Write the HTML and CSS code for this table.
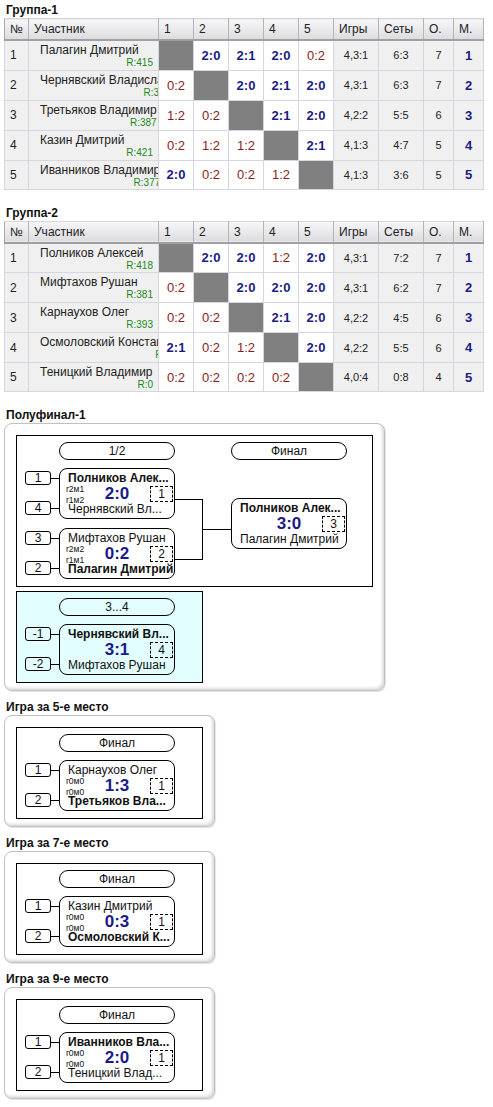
FILE: index.html
```html
<!DOCTYPE html>
<html lang="ru">
<head>
  <meta charset="UTF-8">
  <title>Турнир</title>
  <link rel="stylesheet" href="styles.css">
</head>
<body>

<!-- Группа 1 -->
<div class="sect">
  <div class="ttl">Группа-1</div>
  <table class="grid">
    <colgroup>
      <col class="c-no"><col class="c-who"><col class="c-sc"><col class="c-sc"><col class="c-sc"><col class="c-sc"><col class="c-sc"><col class="c-st"><col class="c-st"><col class="c-pt"><col class="c-pt">
    </colgroup>
    <thead>
      <tr><th>№</th><th>Участник</th><th>1</th><th>2</th><th>3</th><th>4</th><th>5</th><th>Игры</th><th>Сеты</th><th>О.</th><th>М.</th></tr>
    </thead>
    <tbody>
      <tr><td class="no">1</td><td class="who"><div class="who-in"><span class="fio">Палагин Дмитрий</span><span class="rt">R:415</span></div></td>
        <td class="x"></td><td class="w">2:0</td><td class="w">2:1</td><td class="w">2:0</td><td class="l">0:2</td>
        <td class="st">4,3:1</td><td class="st">6:3</td><td class="st">7</td><td class="pl">1</td></tr>
      <tr><td class="no">2</td><td class="who"><div class="who-in"><span class="fio">Чернявский Владислав</span><span class="rt">R:386</span></div></td>
        <td class="l">0:2</td><td class="x"></td><td class="w">2:0</td><td class="w">2:1</td><td class="w">2:0</td>
        <td class="st">4,3:1</td><td class="st">6:3</td><td class="st">7</td><td class="pl">2</td></tr>
      <tr><td class="no">3</td><td class="who"><div class="who-in"><span class="fio">Третьяков Владимир</span><span class="rt">R:387</span></div></td>
        <td class="l">1:2</td><td class="l">0:2</td><td class="x"></td><td class="w">2:1</td><td class="w">2:0</td>
        <td class="st">4,2:2</td><td class="st">5:5</td><td class="st">6</td><td class="pl">3</td></tr>
      <tr><td class="no">4</td><td class="who"><div class="who-in"><span class="fio">Казин Дмитрий</span><span class="rt">R:421</span></div></td>
        <td class="l">0:2</td><td class="l">1:2</td><td class="l">1:2</td><td class="x"></td><td class="w">2:1</td>
        <td class="st">4,1:3</td><td class="st">4:7</td><td class="st">5</td><td class="pl">4</td></tr>
      <tr><td class="no">5</td><td class="who"><div class="who-in"><span class="fio">Иванников Владимир</span><span class="rt">R:377</span></div></td>
        <td class="w">2:0</td><td class="l">0:2</td><td class="l">0:2</td><td class="l">1:2</td><td class="x"></td>
        <td class="st">4,1:3</td><td class="st">3:6</td><td class="st">5</td><td class="pl">5</td></tr>
    </tbody>
  </table>
</div>

<!-- Группа 2 -->
<div class="sect">
  <div class="ttl">Группа-2</div>
  <table class="grid">
    <colgroup>
      <col class="c-no"><col class="c-who"><col class="c-sc"><col class="c-sc"><col class="c-sc"><col class="c-sc"><col class="c-sc"><col class="c-st"><col class="c-st"><col class="c-pt"><col class="c-pt">
    </colgroup>
    <thead>
      <tr><th>№</th><th>Участник</th><th>1</th><th>2</th><th>3</th><th>4</th><th>5</th><th>Игры</th><th>Сеты</th><th>О.</th><th>М.</th></tr>
    </thead>
    <tbody>
      <tr><td class="no">1</td><td class="who"><div class="who-in"><span class="fio">Полников Алексей</span><span class="rt">R:418</span></div></td>
        <td class="x"></td><td class="w">2:0</td><td class="w">2:0</td><td class="l">1:2</td><td class="w">2:0</td>
        <td class="st">4,3:1</td><td class="st">7:2</td><td class="st">7</td><td class="pl">1</td></tr>
      <tr><td class="no">2</td><td class="who"><div class="who-in"><span class="fio">Мифтахов Рушан</span><span class="rt">R:381</span></div></td>
        <td class="l">0:2</td><td class="x"></td><td class="w">2:0</td><td class="w">2:0</td><td class="w">2:0</td>
        <td class="st">4,3:1</td><td class="st">6:2</td><td class="st">7</td><td class="pl">2</td></tr>
      <tr><td class="no">3</td><td class="who"><div class="who-in"><span class="fio">Карнаухов Олег</span><span class="rt">R:393</span></div></td>
        <td class="l">0:2</td><td class="l">0:2</td><td class="x"></td><td class="w">2:1</td><td class="w">2:0</td>
        <td class="st">4,2:2</td><td class="st">4:5</td><td class="st">6</td><td class="pl">3</td></tr>
      <tr><td class="no">4</td><td class="who"><div class="who-in"><span class="fio">Осмоловский Константин</span><span class="rt">R:402</span></div></td>
        <td class="w">2:1</td><td class="l">0:2</td><td class="l">1:2</td><td class="x"></td><td class="w">2:0</td>
        <td class="st">4,2:2</td><td class="st">5:5</td><td class="st">6</td><td class="pl">4</td></tr>
      <tr><td class="no">5</td><td class="who"><div class="who-in"><span class="fio">Теницкий Владимир</span><span class="rt">R:0</span></div></td>
        <td class="l">0:2</td><td class="l">0:2</td><td class="l">0:2</td><td class="l">0:2</td><td class="x"></td>
        <td class="st">4,0:4</td><td class="st">0:8</td><td class="st">4</td><td class="pl">5</td></tr>
    </tbody>
  </table>
</div>

<!-- Полуфинал -->
<div class="sect sect-br">
  <div class="ttl">Полуфинал-1</div>
  <div class="panel">
    <div class="board board-wide">
      <div class="col">
        <div class="pill">1/2</div>
        <div class="pair">
          <div class="seeds">
            <div class="seed"><span class="num">1</span><i class="link"></i></div>
            <div class="seed"><span class="num">4</span><i class="link"></i></div>
          </div>
          <div class="match">
            <div class="nm win">Полников Алек...</div>
            <div class="mid"><div class="tags"><span>r2м1</span><span>r1м2</span></div><div class="sc">2:0</div><div class="gm">1</div></div>
            <div class="nm">Чернявский Вл...</div>
          </div>
        </div>
        <div class="pair">
          <div class="seeds">
            <div class="seed"><span class="num">3</span><i class="link"></i></div>
            <div class="seed"><span class="num">2</span><i class="link"></i></div>
          </div>
          <div class="match">
            <div class="nm">Мифтахов Рушан</div>
            <div class="mid"><div class="tags"><span>r2м2</span><span>r1м1</span></div><div class="sc">0:2</div><div class="gm">2</div></div>
            <div class="nm win">Палагин Дмитрий</div>
          </div>
        </div>
      </div>
      <div class="join"><div class="fork"></div><div class="tail"></div></div>
      <div class="col col-final">
        <div class="pill">Финал</div>
        <div class="match match-final">
          <div class="nm win">Полников Алек...</div>
          <div class="mid"><div class="tags"></div><div class="sc">3:0</div><div class="gm">3</div></div>
          <div class="nm">Палагин Дмитрий</div>
        </div>
      </div>
    </div>
    <div class="board board-cyan">
      <div class="col">
        <div class="pill">3...4</div>
        <div class="pair">
          <div class="seeds">
            <div class="seed"><span class="num">-1</span><i class="link"></i></div>
            <div class="seed"><span class="num">-2</span><i class="link"></i></div>
          </div>
          <div class="match">
            <div class="nm win">Чернявский Вл...</div>
            <div class="mid"><div class="tags"></div><div class="sc">3:1</div><div class="gm">4</div></div>
            <div class="nm">Мифтахов Рушан</div>
          </div>
        </div>
      </div>
    </div>
  </div>
</div>

<!-- 5-е место -->
<div class="sect sect-br">
  <div class="ttl">Игра за 5-е место</div>
  <div class="panel">
    <div class="board">
      <div class="col">
        <div class="pill">Финал</div>
        <div class="pair">
          <div class="seeds">
            <div class="seed"><span class="num">1</span><i class="link"></i></div>
            <div class="seed"><span class="num">2</span><i class="link"></i></div>
          </div>
          <div class="match">
            <div class="nm">Карнаухов Олег</div>
            <div class="mid"><div class="tags"><span>r0м0</span><span>r0м0</span></div><div class="sc">1:3</div><div class="gm">1</div></div>
            <div class="nm win">Третьяков Вла...</div>
          </div>
        </div>
      </div>
    </div>
  </div>
</div>

<!-- 7-е место -->
<div class="sect sect-br">
  <div class="ttl">Игра за 7-е место</div>
  <div class="panel">
    <div class="board">
      <div class="col">
        <div class="pill">Финал</div>
        <div class="pair">
          <div class="seeds">
            <div class="seed"><span class="num">1</span><i class="link"></i></div>
            <div class="seed"><span class="num">2</span><i class="link"></i></div>
          </div>
          <div class="match">
            <div class="nm">Казин Дмитрий</div>
            <div class="mid"><div class="tags"><span>r0м0</span><span>r0м0</span></div><div class="sc">0:3</div><div class="gm">1</div></div>
            <div class="nm win">Осмоловский К...</div>
          </div>
        </div>
      </div>
    </div>
  </div>
</div>

<!-- 9-е место -->
<div class="sect sect-br">
  <div class="ttl">Игра за 9-е место</div>
  <div class="panel">
    <div class="board">
      <div class="col">
        <div class="pill">Финал</div>
        <div class="pair">
          <div class="seeds">
            <div class="seed"><span class="num">1</span><i class="link"></i></div>
            <div class="seed"><span class="num">2</span><i class="link"></i></div>
          </div>
          <div class="match">
            <div class="nm win">Иванников Вла...</div>
            <div class="mid"><div class="tags"><span>r0м0</span><span>r0м0</span></div><div class="sc">2:0</div><div class="gm">1</div></div>
            <div class="nm">Теницкий Влад...</div>
          </div>
        </div>
      </div>
    </div>
  </div>
</div>

</body>
</html>
```

FILE: styles.css
```css
body{margin:0;padding:2px 4px;font-family:"Liberation Sans",Arial,sans-serif;color:#222;background:#fff}
.sect{margin-bottom:15px}
.sect-br{margin-bottom:8px}
.ttl{font-size:12px;font-weight:700;line-height:16px;padding-left:2px;color:#111}

/* ---------- таблица группы ---------- */
.grid{border-collapse:collapse;table-layout:fixed;width:479px;font-size:12px;border-left:1px solid #a8a8a8;border-right:1px solid #a8a8a8;border-bottom:1px solid #a8a8a8}
.c-no{width:24px}.c-who{width:130px}.c-sc{width:35px}.c-st{width:45px}.c-pt{width:30px}
.grid th{height:20px;padding:0 0 0 5px;text-align:left;font-weight:400;color:#222;background:linear-gradient(#f7f7f8,#dcdce0);border-right:1px solid #b4b4b8;border-top:1px solid #d8d8dc;border-bottom:2px solid #a0a0a4}
.grid tbody tr{height:30px}
.grid tbody tr:last-child{height:28px}
.grid td{padding:0;border:1px solid #d6d6de;text-align:center;background:#fff}
.grid td.no{text-align:left;padding-left:5px;background:#f0f0f0}
.grid td.who{vertical-align:top;overflow:hidden;background:#f0f0f0;text-align:left}
.who-in{width:max-content;min-width:100%;box-sizing:border-box;padding:2px 5px 0 11px}
.fio{display:block;line-height:14px;white-space:nowrap}
.rt{display:block;text-align:right;font-size:10px;line-height:12px;color:#1a8a1a}
.grid td.x{background:#808080}
.grid td.w{font-size:13px;font-weight:700;color:#1b1b86}
.grid td.l{font-size:13px;color:#8b1c1c}
.grid td.st{font-size:11px;background:#f0f0f0}
.grid td.pl{font-size:13px;font-weight:700;color:#1b1b86;background:#f0f0f0}

/* ---------- сетка плей-офф ---------- */
.panel{display:inline-flex;flex-direction:column;gap:4px;padding:11px 11px 7px;border:1px solid #c0c0c0;border-radius:8px;box-shadow:inset -2px -2px 3px #dcdcdc,1px 1px 1px #e4e4e4;background:#fff}
.board{display:flex;align-items:flex-start;width:187px;box-sizing:border-box;padding:6px 0 7px 8px;border:1px solid #000;background:#fff}
.board-wide{width:357px}
.board-cyan{background:#e2fefe}
.col{display:flex;flex-direction:column;gap:9px}
.pill{margin-left:34px;margin-bottom:-1px;width:116px;height:18px;box-sizing:border-box;border:1px solid #000;border-radius:9px;text-align:center;font-size:12px;line-height:16px;color:#111}
.col-final .pill{margin-left:0}
.pair{display:flex;align-items:flex-start}
.seeds{display:flex;flex-direction:column;gap:16px;padding-top:3px}
.seed{display:flex;align-items:center}
.num{width:26px;height:14px;box-sizing:border-box;border:1px solid #000;border-radius:3px;text-align:center;font-size:12px;line-height:12px;color:#111}
.link{display:block;width:8px;height:1px;background:#000}
.match{width:116px;height:51px;box-sizing:border-box;padding:2px 0;border:1px solid #000;border-radius:8px;font-size:12px;color:#111;background:transparent}
.nm{height:14px;line-height:14px;padding-left:8px;white-space:nowrap;overflow:hidden}
.nm.win{font-weight:700}
.mid{display:grid;grid-template-columns:1fr auto 1fr;align-items:center;height:17px}
.tags{justify-self:start;display:flex;flex-direction:column;gap:3px;margin:0 0 -2px;padding-left:6px;font-size:8.5px;line-height:8px}
.sc{font-size:17px;font-weight:700;line-height:17px;color:#1a1a8c}
.gm{justify-self:end;width:23px;height:16px;box-sizing:border-box;margin-right:1px;border:1px dashed #000;text-align:center;font-size:12px;line-height:14px}
.join{display:flex;align-items:center;margin-top:57px}
.fork{width:27px;height:59px;border:1px solid #000;border-left:none}
.tail{width:28px;height:1px;background:#000}
.match-final{margin-top:30px}
```
